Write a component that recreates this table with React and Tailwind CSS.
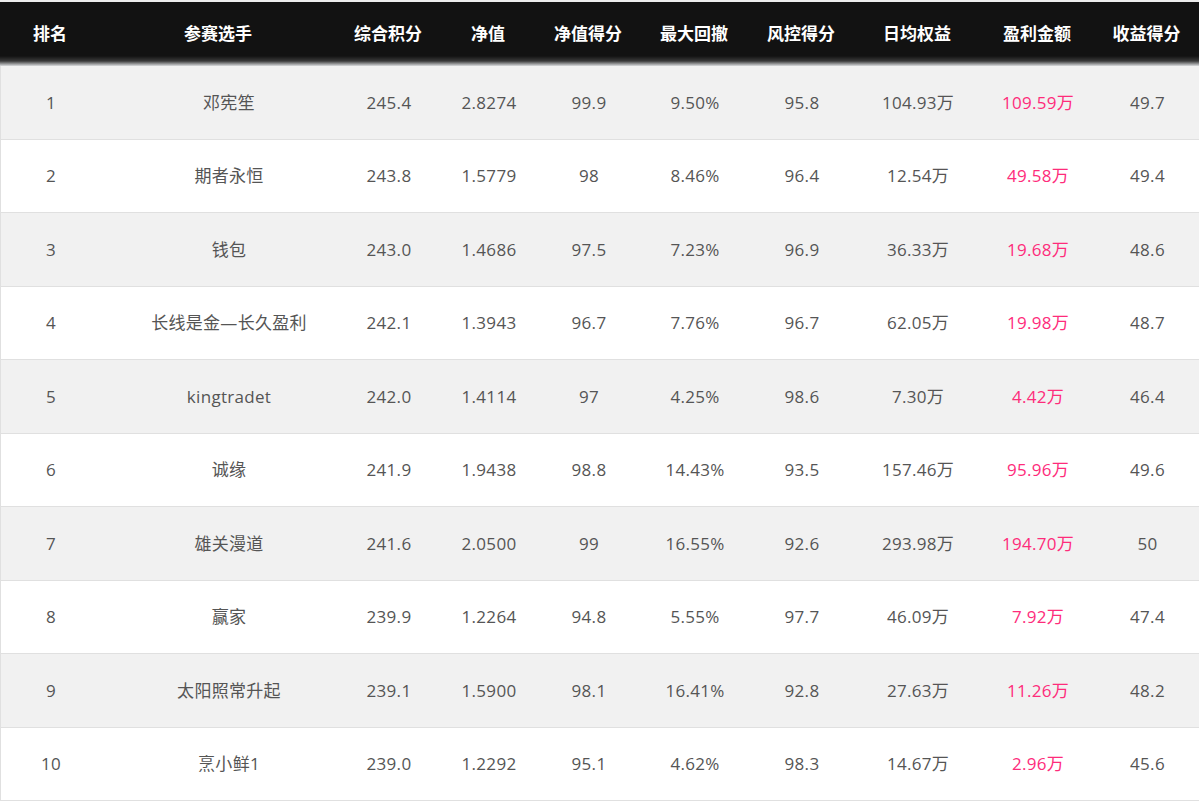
const rows = [
  ["1", "邓宪笙", "245.4", "2.8274", "99.9", "9.50%", "95.8", "104.93万", "109.59万", "49.7"],
  ["2", "期者永恒", "243.8", "1.5779", "98", "8.46%", "96.4", "12.54万", "49.58万", "49.4"],
  ["3", "钱包", "243.0", "1.4686", "97.5", "7.23%", "96.9", "36.33万", "19.68万", "48.6"],
  ["4", "长线是金—长久盈利", "242.1", "1.3943", "96.7", "7.76%", "96.7", "62.05万", "19.98万", "48.7"],
  ["5", "kingtradet", "242.0", "1.4114", "97", "4.25%", "98.6", "7.30万", "4.42万", "46.4"],
  ["6", "诚缘", "241.9", "1.9438", "98.8", "14.43%", "93.5", "157.46万", "95.96万", "49.6"],
  ["7", "雄关漫道", "241.6", "2.0500", "99", "16.55%", "92.6", "293.98万", "194.70万", "50"],
  ["8", "赢家", "239.9", "1.2264", "94.8", "5.55%", "97.7", "46.09万", "7.92万", "47.4"],
  ["9", "太阳照常升起", "239.1", "1.5900", "98.1", "16.41%", "92.8", "27.63万", "11.26万", "48.2"],
  ["10", "烹小鲜1", "239.0", "1.2292", "95.1", "4.62%", "98.3", "14.67万", "2.96万", "45.6"],
];

const headers = ["排名", "参赛选手", "综合积分", "净值", "净值得分", "最大回撤", "风控得分", "日均权益", "盈利金额", "收益得分"];

const cols = "grid grid-cols-[100px_236px_104px_96px_104px_108px_106px_126px_114px_105px]";

export default function App() {
  return (
    <div className="w-[1199px] h-[802px] overflow-hidden bg-white font-['Open_Sans','Noto_Sans_CJK_SC',sans-serif]">
      <div className="h-[2px] bg-[#ececec]" />

      {/* header */}
      <div className={`${cols} h-[64px] bg-[linear-gradient(to_bottom,#121212_0px,#121212_54px,#3a3a3a_59px,#d9dbdd_64px)]`}>
        {headers.map((h) => (
          <div key={h} className="flex items-center justify-center pb-[2px] text-white text-[17px] font-bold font-['Noto_Sans_CJK_SC',sans-serif]">
            {h}
          </div>
        ))}
      </div>

      {/* rows */}
      {rows.map((r, i) => (
        <div
          key={r[0]}
          className={`${cols} h-[73.5px] border-b border-l border-[#e0e0e0] text-[17px] tracking-[0.3px] text-[#555] ${i % 2 === 0 ? "bg-[#f1f1f1]" : "bg-white"}`}
        >
          {r.map((v, j) => (
            <div
              key={j}
              className={`flex items-center justify-center ${j === 1 ? "pl-[20px]" : ""} ${j === 8 ? "text-[#fe2c7b]" : ""}`}
            >
              {v}
            </div>
          ))}
        </div>
      ))}
    </div>
  );
}
